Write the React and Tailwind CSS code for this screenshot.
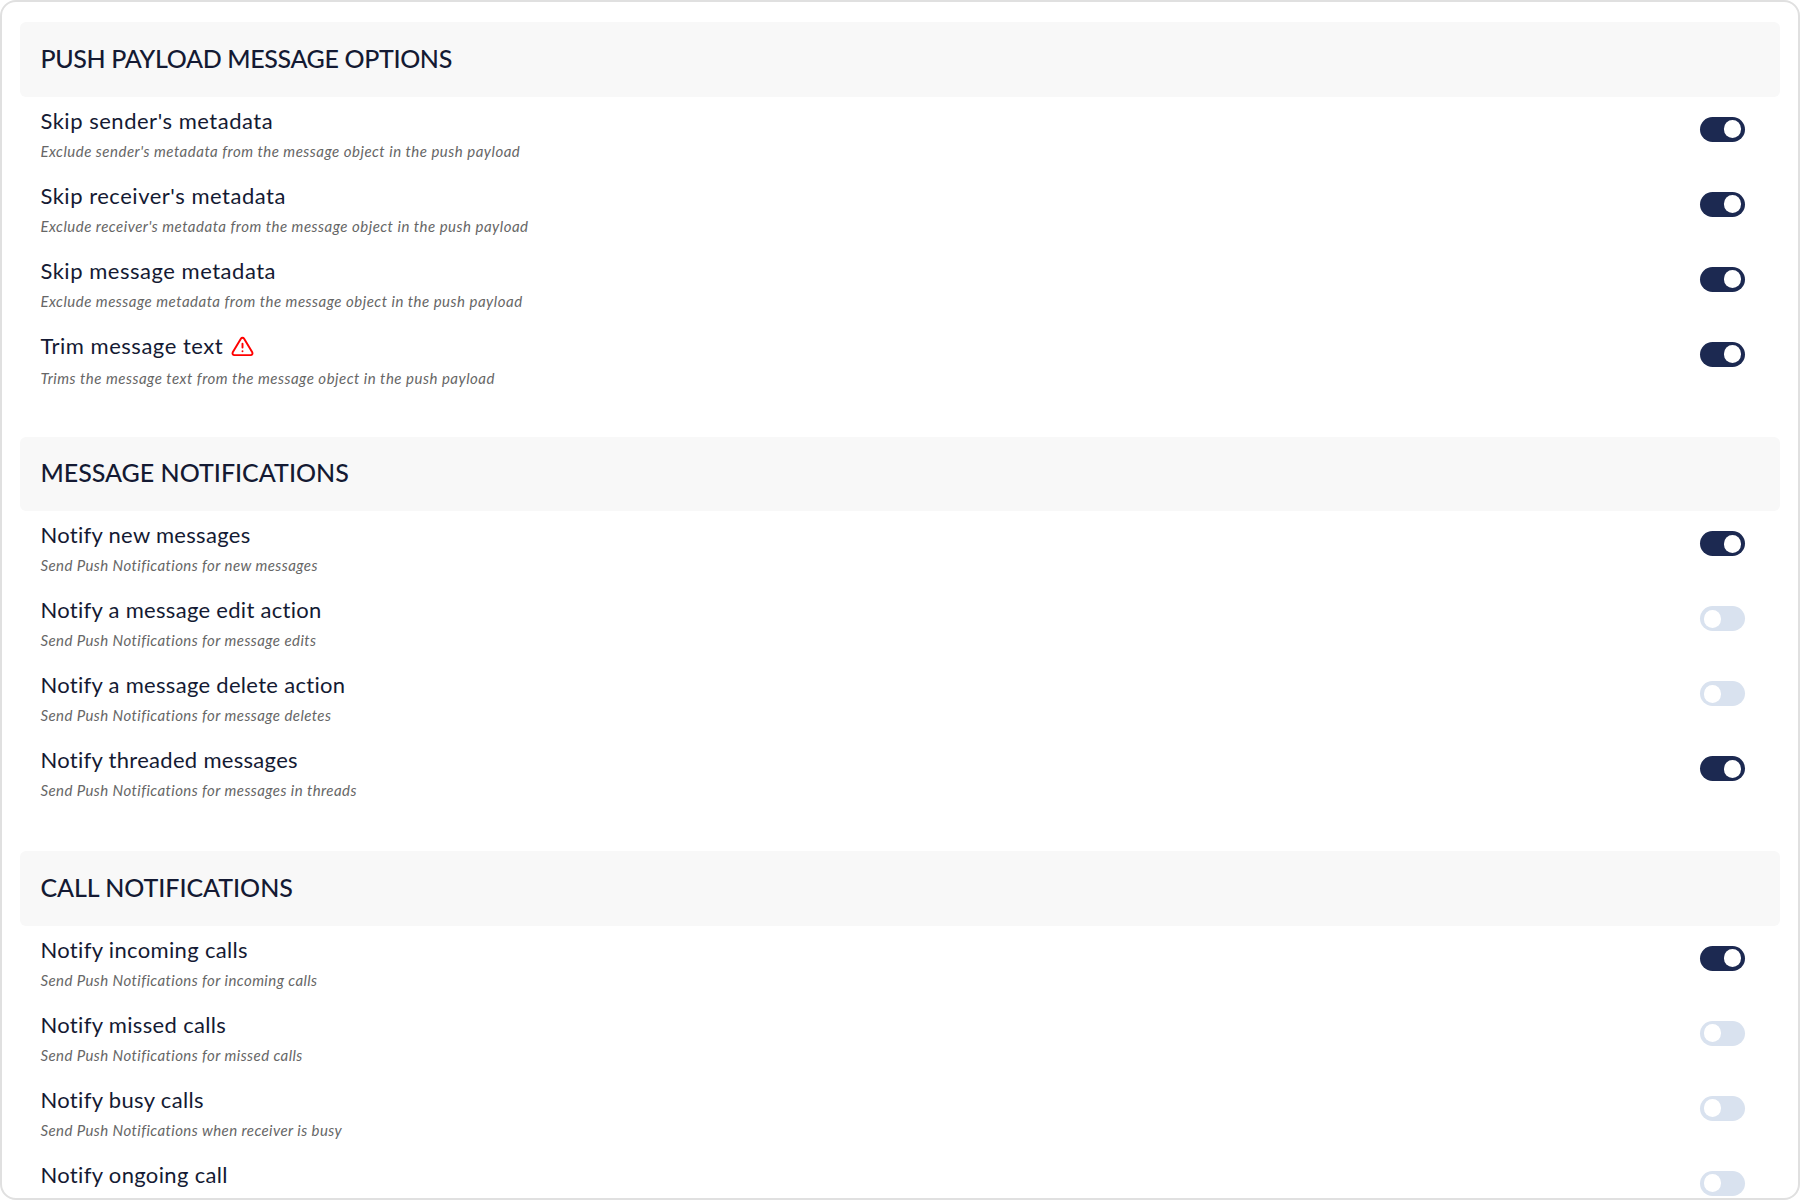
import { useState } from "react";
import { FiAlertTriangle } from "react-icons/fi";

const sections = [
  {
    title: "PUSH PAYLOAD MESSAGE OPTIONS",
    titleClass: "tracking-[-0.36px]",
    labelClass: "tracking-[0.52px]",
    hintClass: "tracking-[0.5px]",
    options: [
      { label: "Skip sender's metadata", hint: "Exclude sender's metadata from the message object in the push payload", on: true },
      { label: "Skip receiver's metadata", hint: "Exclude receiver's metadata from the message object in the push payload", on: true },
      { label: "Skip message metadata", hint: "Exclude message metadata from the message object in the push payload", on: true },
      { label: "Trim message text", hint: "Trims the message text from the message object in the push payload", on: true, warning: true },
    ],
  },
  {
    title: "MESSAGE NOTIFICATIONS",
    titleClass: "tracking-normal",
    labelClass: "tracking-[0.3px]",
    hintClass: "tracking-[0.43px]",
    options: [
      { label: "Notify new messages", hint: "Send Push Notifications for new messages", on: true },
      { label: "Notify a message edit action", hint: "Send Push Notifications for message edits", on: false },
      { label: "Notify a message delete action", hint: "Send Push Notifications for message deletes", on: false },
      { label: "Notify threaded messages", hint: "Send Push Notifications for messages in threads", on: true },
    ],
  },
  {
    title: "CALL NOTIFICATIONS",
    titleClass: "tracking-[-0.05px]",
    labelClass: "tracking-[0.34px]",
    hintClass: "tracking-[0.43px]",
    options: [
      { label: "Notify incoming calls", hint: "Send Push Notifications for incoming calls", on: true },
      { label: "Notify missed calls", hint: "Send Push Notifications for missed calls", on: false },
      { label: "Notify busy calls", hint: "Send Push Notifications when receiver is busy", on: false },
      { label: "Notify ongoing call", on: false },
    ],
  },
];

function Toggle({ label, defaultOn }) {
  const [on, setOn] = useState(defaultOn);

  return (
    <button
      role="switch"
      aria-checked={on}
      aria-label={label}
      onClick={() => setOn(!on)}
      className={`mt-5 flex h-[25px] w-[45px] shrink-0 items-center rounded-full px-1 ${on ? "justify-end bg-[#1c2951]" : "justify-start bg-[#d9e2ef]"}`}
    >
      <span className="h-[18px] w-[17px] rounded-full bg-white" />
    </button>
  );
}

function Option({ option, labelClass, hintClass }) {
  return (
    <div className="flex h-[75px] justify-between pl-[20.4px] pr-[35px]">
      <div className="pt-[9px]">
        <div className={`flex h-[30px] items-center text-[22px] leading-[30px] text-[#141a33] ${labelClass}`}>
          {option.label}
          {option.warning && <FiAlertTriangle className="ml-2 mt-px size-[23px] text-[#ff0000]" />}
        </div>
        {option.hint && (
          <p className={`text-[15px] italic leading-[22px] text-[#666666] ${hintClass} ${option.warning ? "mt-1.5" : "mt-1"}`}>
            {option.hint}
          </p>
        )}
      </div>
      <Toggle label={option.label} defaultOn={option.on} />
    </div>
  );
}

function App() {
  return (
    <div className="h-[1200px] overflow-hidden rounded-2xl border-2 border-[#e0e0e0] bg-white px-[18px] pt-5 font-[Lato,sans-serif]">
      {sections.map((section) => (
        <section key={section.title} className="h-[414.5px]">
          <h2 className={`flex h-[74.6px] items-center rounded-md bg-[#f8f8f8] pb-[3px] pl-[20.4px] text-[25px] font-medium leading-8 text-[#141a33] ${section.titleClass}`}>
            {section.title}
          </h2>
          {section.options.map((option) => (
            <Option
              key={option.label}
              option={option}
              labelClass={section.labelClass}
              hintClass={section.hintClass}
            />
          ))}
        </section>
      ))}
    </div>
  );
}

export default App;
